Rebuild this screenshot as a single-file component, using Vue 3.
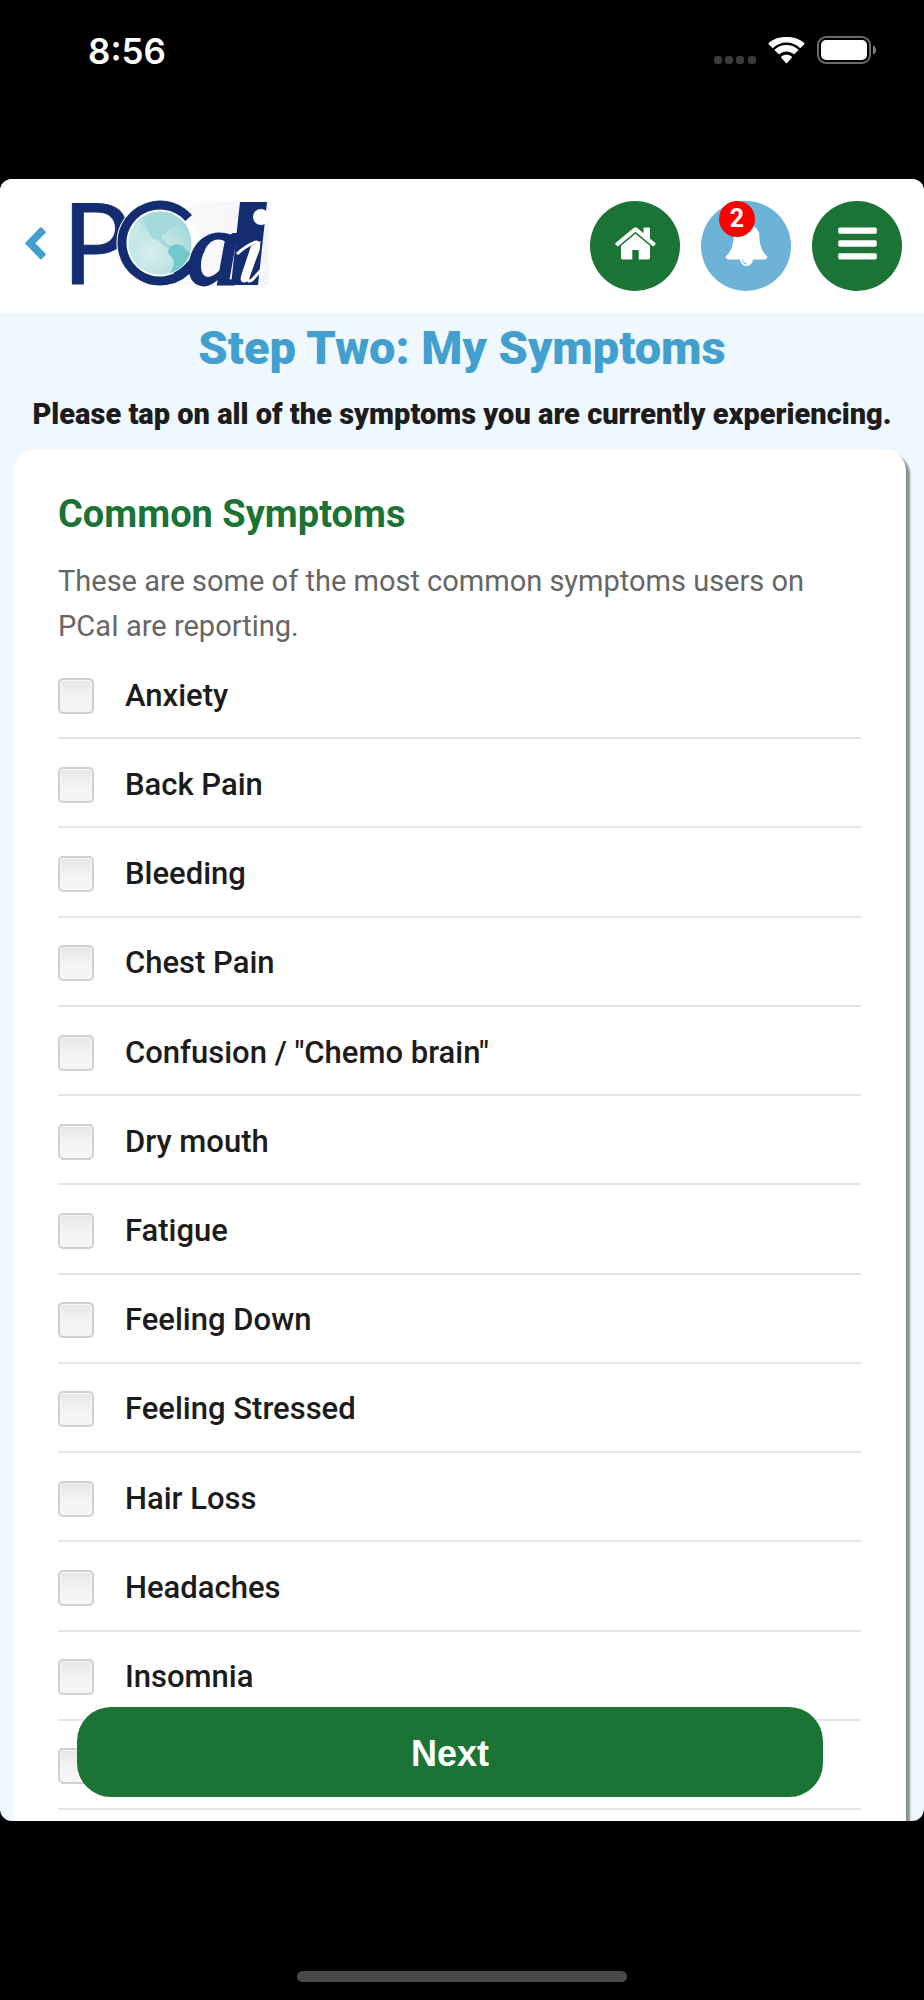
<script setup>
import { ref } from 'vue'

const symptoms = ref([
  'Anxiety',
  'Back Pain',
  'Bleeding',
  'Chest Pain',
  'Confusion / "Chemo brain"',
  'Dry mouth',
  'Fatigue',
  'Feeling Down',
  'Feeling Stressed',
  'Hair Loss',
  'Headaches',
  'Insomnia',
  ''
].map((name, index) => ({ id: `symptom-${index}`, name, checked: false })))
</script>

<template>
  <div class="device">
    <div class="status">
      <span class="clock">8:56</span>
      <div class="indicators">
        <svg class="signal" width="42" height="8" viewBox="0 0 42 8" aria-hidden="true">
          <rect x="0" width="8" height="8" rx="3" />
          <rect x="11" width="8" height="8" rx="3" />
          <rect x="22" width="8" height="8" rx="3" />
          <rect x="34" width="8" height="8" rx="3" />
        </svg>
        <svg width="37" height="27" viewBox="0 0 37 27" fill="#fff" aria-hidden="true">
          <path d="M18.500 5.500c5 0 9.700 2 13.200 5.300.3.300.7.300 1 0l3.600-3.600a.8.800 0 0 0 0-1.100C31.500 1.500 25 0 18.500 0S5.500 1.500.7 6.100a.8.800 0 0 0 0 1.100l3.600 3.600c.3.300.7.300 1 0C8.800 7.500 13.500 5.500 18.500 5.500z" />
          <path d="M18.500 14.500c2.600 0 5 1 6.900 2.600.3.300.7.300 1 0l3.700-3.600a.8.800 0 0 0 0-1.100c-6.300-5.900-16.900-5.900-23.200 0a.8.800 0 0 0 0 1.100l3.700 3.600c.3.300.7.300 1 0 1.900-1.600 4.300-2.600 6.900-2.600z" />
          <path d="M23.700 20.700c.3-.3.300-.8 0-1.100-3-2.500-7.400-2.500-10.400 0-.3.300-.3.800 0 1.100l4.600 5.300c.4.400.8.400 1.200 0z" />
        </svg>
        <svg width="60" height="28" viewBox="0 0 60 28" aria-hidden="true">
          <rect x="1" y="1" width="52" height="26" rx="8" fill="none" stroke="#6b6b6b" stroke-width="2" />
          <rect x="4" y="4" width="46" height="20" rx="5" fill="#fff" />
          <path d="M56 9.500v9c2-.8 3-2.500 3-4.500s-1-3.700-3-4.500z" fill="#808080" />
        </svg>
      </div>
    </div>

    <div class="app">
      <header class="topbar">
        <button class="back" type="button" aria-label="Back">
          <svg width="21" height="33" viewBox="0 0 21 33" aria-hidden="true">
            <path d="M15 .5Q16 0 17 .8l3.500 3.700q.7.700 0 1.500L10.300 16.300l10.200 10.300q.7.800 0 1.500L17 31.900q-1 .8-2 0L.7 17.200q-.7-.9 0-1.700z" fill="#439fcd" />
          </svg>
        </button>
        <a class="logo" href="#" aria-label="PCaI">
          <svg width="198" height="85" viewBox="0 0 198 85" aria-hidden="true">
            <defs>
              <linearGradient id="paper" x1="0" x2="1">
                <stop offset="0.3" stop-color="#fff" />
                <stop offset="1" stop-color="#f4f4f9" />
              </linearGradient>
              <radialGradient id="ocean" cx="0.35" cy="0.65" r="0.75">
                <stop offset="0" stop-color="#d8eff0" />
                <stop offset="0.6" stop-color="#b9e1e2" />
                <stop offset="1" stop-color="#9dd8dc" />
              </radialGradient>
              <clipPath id="globe"><circle cx="89" cy="42" r="32" /></clipPath>
            </defs>
            <rect width="198" height="85" fill="url(#paper)" />
            <text x="-9" y="83" class="mark-p">P</text>
            <circle cx="89" cy="42" r="38" fill="#fff" stroke="#fff" stroke-width="11" stroke-dasharray="190 49" transform="rotate(35 89 42)" />
            <circle cx="89" cy="42" r="38" fill="none" stroke="#142c70" stroke-width="9" stroke-dasharray="188 51" transform="rotate(35 89 42)" />
            <circle cx="89" cy="42" r="32" fill="url(#ocean)" stroke="#eefafa" stroke-width="1" />
            <g clip-path="url(#globe)">
              <path d="M72 17l12-6 18 1 7 9-5 5-5 1-5 6-3 1-1 4 4 1 2 4 5 2-2 2-6-2-5-5-7-3-4-7-2-6z" fill="#a5dadc" />
              <path d="M98 46l8-3 6 2 4 5 4 1-2 9-8 8-8 6-3-2 4-8-1-6-5-6z" fill="#72c8cb" />
              <path d="M60 28l8-8 3 5-4 7-5 9-4-2z" fill="#cae8e9" />
            </g>
            <path d="M104 75q12-5 27-27" fill="none" stroke="#142c70" stroke-width="7" />
            <text x="116" y="83" class="mark-a">a</text>
            <path d="M169 1h27l-9 83h-27z" fill="#142c70" />
            <circle cx="190" cy="16" r="8" fill="#fff" />
            <path d="M166 53q10-9 19-12 4 0 2 8l-10 27q-1 6 4 3l12-13" fill="none" stroke="#fff" stroke-width="3" />
            <path d="M180 45l10-5-12 38q-4 6-8 2-1-2 1-8z" fill="#fff" />
          </svg>
        </a>
        <nav class="actions" aria-label="Main">
          <a class="round" href="#" aria-label="Home">
            <svg width="45" height="45" viewBox="0 0 1792 1792" aria-hidden="true"><path d="M1472 992v480q0 26-19 45t-45 19h-384v-384h-256v384h-384q-26 0-45-19t-19-45v-480q0-1 .5-3t.5-3l575-474 575 474q1 2 1 6zm223-69l-62 74q-8 9-21 11h-3q-13 0-21-7l-692-577-692 577q-12 8-24 7-13-2-21-11l-62-74q-8-10-7-23.500t11-21.500l719-599q32-26 76-26t76 26l244 204v-195q0-14 9-23t23-9h192q14 0 23 9t9 23v408l219 182q10 8 11 21.500t-7 23.500z" /></svg>
          </a>
          <button class="round alerts" type="button" aria-label="Notifications, 2 new">
            <svg width="45" height="45" viewBox="0 0 1792 1792" aria-hidden="true"><path d="M912 1696q0-16-16-16-59 0-101.500-42.500t-42.500-101.500q0-16-16-16t-16 16q0 73 51.500 124.500t124.500 51.500q16 0 16-16zm816-288q0 52-38 90t-90 38h-448q0 106-75 181t-181 75-181-75-75-181h-448q-52 0-90-38t-38-90q50-42 91-88t85-119.500 74.500-158.500 50-206 19.500-260q0-152 117-282.500t307-158.500q-8-19-8-39 0-40 28-68t68-28 68 28 28 68q0 20-8 39 190 28 307 158.500t117 282.500q0 139 19.500 260t50 206 74.500 158.500 85 119.500 91 88z" /></svg>
            <span class="badge">2</span>
          </button>
          <button class="round" type="button" aria-label="Menu">
            <svg width="45" height="45" viewBox="0 0 1792 1792" aria-hidden="true"><path d="M1664 1344v128q0 26-19 45t-45 19h-1408q-26 0-45-19t-19-45v-128q0-26 19-45t45-19h1408q26 0 45 19t19 45zm0-512v128q0 26-19 45t-45 19h-1408q-26 0-45-19t-19-45v-128q0-26 19-45t45-19h1408q26 0 45 19t19 45zm0-512v128q0 26-19 45t-45 19h-1408q-26 0-45-19t-19-45v-128q0-26 19-45t45-19h1408q26 0 45 19t19 45z" /></svg>
          </button>
        </nav>
      </header>

      <main>
        <h1>Step Two: My Symptoms</h1>
        <p class="prompt">Please tap on all of the symptoms you are currently experiencing.</p>
        <section class="card">
          <h2>Common Symptoms</h2>
          <p class="intro">These are some of the most common symptoms users on PCaI are reporting.</p>
          <ul class="symptoms">
            <li v-for="symptom in symptoms" :key="symptom.id">
              <input :id="symptom.id" v-model="symptom.checked" type="checkbox">
              <label :for="symptom.id">{{ symptom.name }}</label>
            </li>
          </ul>
        </section>
      </main>

      <button class="next" type="button">Next</button>
    </div>

    <div class="home-indicator"></div>
  </div>
</template>

<style>
body {
  background: #000;
}
</style>

<style scoped>
* {
  box-sizing: border-box;
}

.device {
  display: flex;
  flex-direction: column;
  min-height: 100vh;
  background: #000;
  color: #1c1c1c;
  font-family: Roboto, "Liberation Sans", sans-serif;
}

h1,
h2,
p,
ul {
  margin: 0;
  padding: 0;
}

button {
  border: 0;
  padding: 0;
  font-family: inherit;
  cursor: pointer;
}

.status {
  display: flex;
  justify-content: space-between;
  align-items: flex-start;
  height: 179px;
  padding: 36px 47px 0 88px;
  color: #fff;
}

.clock {
  font: 600 35px/30px Inter, sans-serif;
}

.indicators {
  display: flex;
  align-items: center;
  gap: 12px;
}

.signal {
  align-self: flex-end;
  fill: #3a3a3a;
}

.app {
  position: relative;
  overflow: hidden;
  border-radius: 12px;
  background: #eff8fe;
}

.topbar {
  display: flex;
  align-items: flex-start;
  padding: 22px 22px 22px 25px;
  background: #fff;
}

.back {
  display: flex;
  margin-right: 25px;
  padding-top: 26px;
  background: none;
}

.logo {
  display: flex;
}

.logo svg {
  overflow: visible;
}

.mark-p {
  font: 400 113px Lato, sans-serif;
  fill: #142c70;
  stroke: #142c70;
  stroke-width: 1px;
}

.mark-a {
  font: italic 400 106px "Liberation Serif", serif;
  fill: #142c70;
  stroke: #142c70;
  stroke-width: 3px;
}

.actions {
  display: flex;
  gap: 21px;
  margin-left: auto;
}

.round {
  position: relative;
  display: flex;
  align-items: center;
  justify-content: center;
  width: 90px;
  height: 90px;
  padding-bottom: 5px;
  border-radius: 50%;
  background: #1b7336;
}

.round svg {
  fill: #fff;
}

.alerts {
  background: #6db3d7;
}

.badge {
  position: absolute;
  top: 0;
  left: 18px;
  width: 36px;
  height: 36px;
  border-radius: 50%;
  background: #f00;
  color: #fff;
  font-size: 25px;
  font-weight: 700;
  line-height: 36px;
  text-align: center;
}

h1 {
  padding-top: 7px;
  color: #439fcd;
  font-size: 47px;
  font-weight: 900;
  line-height: 56px;
  text-align: center;
}

.prompt {
  padding: 18px 0 15px;
  font-size: 29px;
  font-weight: 900;
  line-height: 40px;
  text-align: center;
}

.card {
  margin: 0 18px 0 14px;
  padding: 40px 45px 11px 44px;
  border-radius: 22px 22px 0 0;
  background: #fff;
  box-shadow: 4px 4px 2px #8c9293;
}

h2 {
  color: #1b7336;
  font-size: 38px;
  font-weight: 700;
  line-height: 50px;
}

.intro {
  padding: 20px 0 1px;
  color: #666;
  font-size: 29px;
  line-height: 45px;
}

.symptoms {
  display: grid;
  grid-auto-rows: 1fr;
  min-height: 1160px;
  list-style: none;
}

.symptoms li {
  display: flex;
  align-items: center;
  gap: 31px;
  padding-top: 4px;
  border-bottom: 2px solid #e5e5e5;
}

input[type="checkbox"] {
  appearance: none;
  width: 36px;
  height: 36px;
  margin: 0;
  border: 2px solid #d0d0d0;
  border-radius: 5px;
  background: linear-gradient(#e6e6e6, #f5f5f5 60%);
  box-shadow: inset 0 0 0 1px #f6f6f6;
}

input[type="checkbox"]:checked {
  background: #1b7336;
}

label {
  flex: 1;
  font-size: 31px;
  font-weight: 500;
  line-height: 40px;
}

.next {
  position: absolute;
  right: 101px;
  bottom: 24px;
  left: 77px;
  height: 90px;
  padding-top: 3px;
  border-radius: 34px;
  background: #1b7336;
  color: #fff;
  font-family: "Liberation Sans", sans-serif;
  font-size: 36px;
  font-weight: 700;
}

.home-indicator {
  width: 330px;
  height: 11px;
  margin: auto auto 18px;
  border-radius: 6px;
  background: #484848;
}
</style>
